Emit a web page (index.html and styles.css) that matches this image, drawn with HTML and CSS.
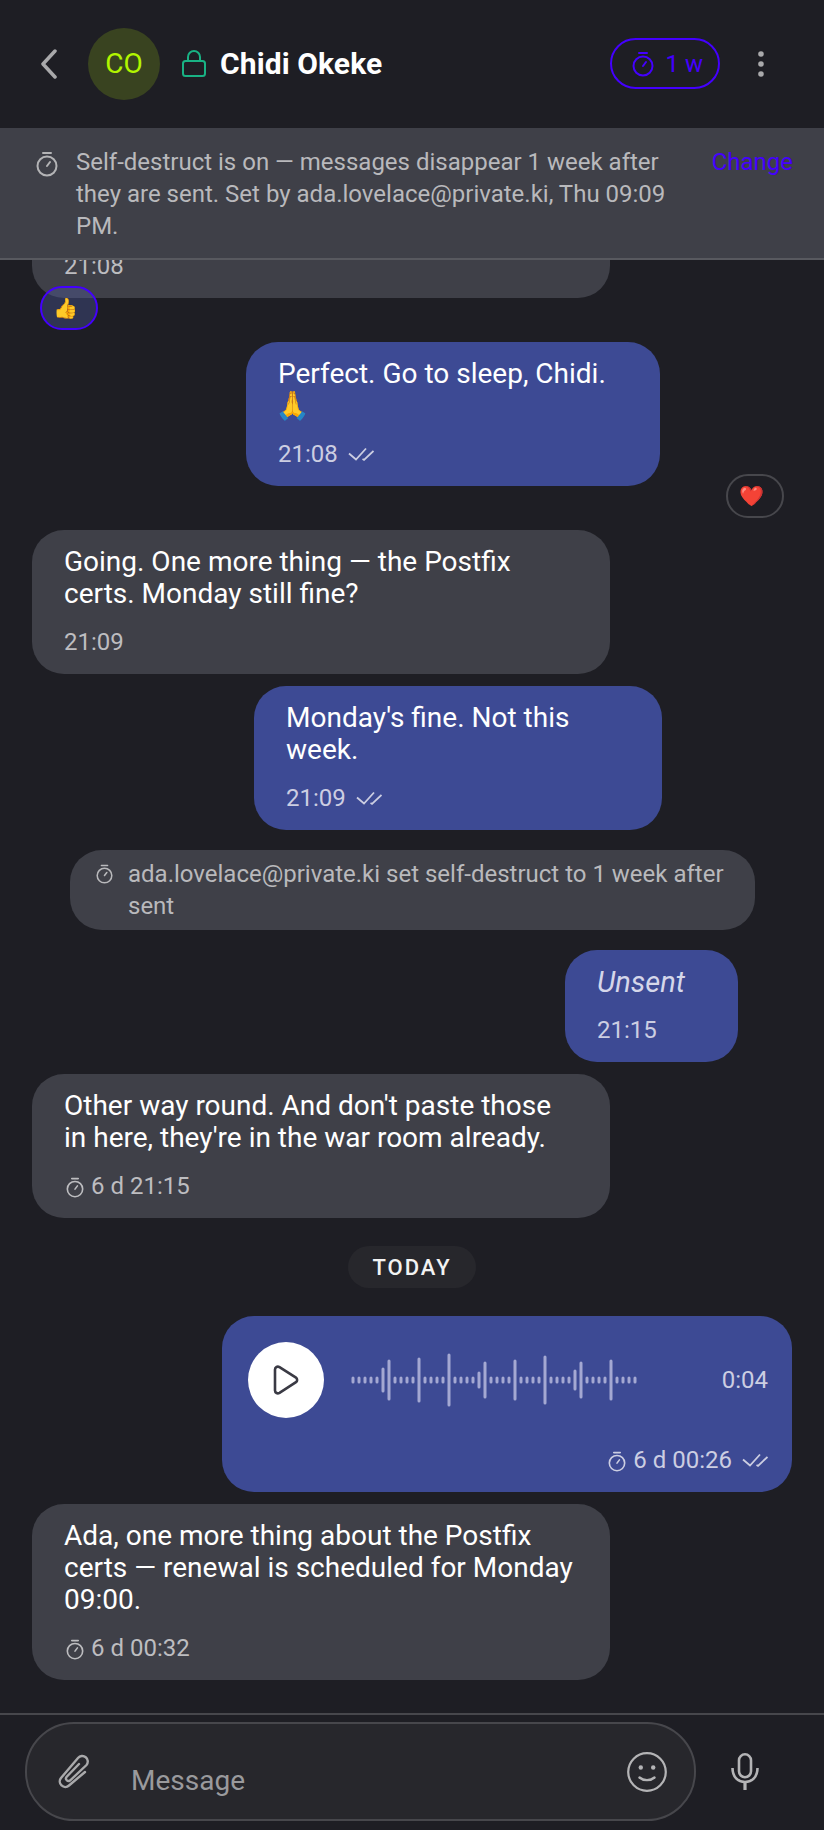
FILE: index.html
```html
<!DOCTYPE html>
<html lang="en">
<head>
    <meta charset="UTF-8">
    <title>Chidi Okeke</title>
    <link rel="stylesheet" href="styles.css">
</head>
<body>

<svg class="defs">
    <symbol id="timer" viewBox="0 0 22 26">
        <path d="M7 2h8M11 15l3-4" fill="none" stroke="currentColor" stroke-width="2" stroke-linecap="round"/>
        <circle cx="11" cy="15" r="9.5" fill="none" stroke="currentColor" stroke-width="2"/>
    </symbol>
    <symbol id="ticks" viewBox="0 0 26 18">
        <path d="M1 8.500l7 6L18 3.500M14.500 14l1.500.8L25.500 6" fill="none" stroke="currentColor" stroke-width="1.800"/>
    </symbol>
</svg>

<!-- header -->
<div class="header">
    <svg class="back" width="18" height="30" viewBox="0 0 18 30"><path d="M15 2L3 15l12 13" fill="none" stroke="currentColor" stroke-width="3.500" stroke-linecap="round" stroke-linejoin="round"/></svg>
    <div class="avatar">CO</div>
    <svg class="lock" width="24" height="27" viewBox="0 0 24 27"><rect x="1" y="11" width="22" height="15" rx="2.500" fill="none" stroke="currentColor" stroke-width="2"/><path d="M6 11V7a6 6 0 0 1 12 0v4" fill="none" stroke="currentColor" stroke-width="2"/></svg>
    <div class="name">Chidi Okeke</div>
    <div class="timer-pill">
        <svg width="22" height="26"><use href="#timer"/></svg>
        <span>1 w</span>
    </div>
    <svg class="kebab" width="6" height="26" viewBox="0 0 6 26"><circle cx="3" cy="3" r="2.800"/><circle cx="3" cy="13" r="2.800"/><circle cx="3" cy="23" r="2.800"/></svg>
</div>

<!-- self-destruct banner -->
<div class="banner">
    <svg class="banner-icon" width="22" height="26"><use href="#timer"/></svg>
    <div class="banner-text">Self-destruct is on — messages disappear 1 week after they are sent. Set by ada.lovelace@private.ki, Thu 09:09 PM.</div>
    <div class="banner-link">Change</div>
</div>

<!-- messages, anchored to the bottom like a scrolled chat -->
<div class="messages">
    <div class="bubble in">
        <div class="meta">21:08</div>
    </div>
    <div class="reaction mine">👍</div>

    <div class="bubble out sent-a">
        <div class="text">Perfect. Go to sleep, Chidi.<br><span class="emoji">🙏</span></div>
        <div class="meta">21:08 <svg class="tick" width="26" height="18"><use href="#ticks"/></svg></div>
    </div>
    <div class="reaction theirs">❤️</div>

    <div class="bubble in">
        <div class="text">Going. One more thing — the Postfix certs. Monday still fine?</div>
        <div class="meta">21:09</div>
    </div>

    <div class="bubble out sent-b">
        <div class="text">Monday's fine. Not this week.</div>
        <div class="meta">21:09 <svg class="tick" width="26" height="18"><use href="#ticks"/></svg></div>
    </div>

    <div class="system">
        <svg class="system-icon" width="17" height="20"><use href="#timer"/></svg>
        <div>ada.lovelace@private.ki set self-destruct to 1 week after sent</div>
    </div>

    <div class="bubble out unsent">
        <div class="text"><em>Unsent</em></div>
        <div class="meta">21:15</div>
    </div>

    <div class="bubble in">
        <div class="text">Other way round. And don't paste those in here, they're in the war room already.</div>
        <div class="meta"><svg class="meta-timer" width="18" height="21"><use href="#timer"/></svg>6 d 21:15</div>
    </div>

    <div class="day">TODAY</div>

    <div class="bubble out voice">
        <div class="player">
            <div class="play">
                <svg width="28" height="32" viewBox="0 0 28 32"><path d="M3 5.500c0-2.500 2.500-3.500 4.500-2.300l16.500 10.500c1.500 1 1.500 3.500 0 4.500L7.500 28.800C5.500 30 3 29 3 26.500z" fill="none" stroke="currentColor" stroke-width="2.600" stroke-linejoin="round"/></svg>
            </div>
            <svg class="wave" width="288" height="54" viewBox="0 0 288 54">
                <path d="M3 25v4M9 25v4M15 25v4M21 25v4M27 25v4M33 16v22M39 8v38M45 25v4M51 25v4M57 25v4M63 25v4M69 6v42M75 25v4M81 25v4M87 25v4M93 25v4M99 2v50M105 25v4M111 25v4M117 25v4M123 25v4M129 20v14M135 10v34M141 25v4M147 25v4M153 25v4M159 25v4M165 8v38M171 25v4M177 25v4M183 25v4M189 25v4M195 4v46M201 25v4M207 25v4M213 25v4M219 25v4M225 18v18M231 10v34M237 25v4M243 25v4M249 25v4M255 25v4M261 8v38M267 25v4M273 25v4M279 25v4M285 25v4"/>
            </svg>
            <div class="duration">0:04</div>
        </div>
        <div class="meta right"><svg class="meta-timer" width="18" height="21"><use href="#timer"/></svg>6 d 00:26 <svg class="tick" width="26" height="18"><use href="#ticks"/></svg></div>
    </div>

    <div class="bubble in">
        <div class="text">Ada, one more thing about the Postfix certs — renewal is scheduled for Monday 09:00.</div>
        <div class="meta"><svg class="meta-timer" width="18" height="21"><use href="#timer"/></svg>6 d 00:32</div>
    </div>
</div>

<!-- composer -->
<div class="composer">
    <div class="input">
        <svg class="clip" width="33" height="36" viewBox="0 0 33 36"><path d="M28 18L12 31.500A5.500 5.500 0 0 1 4 24L21 4A5.500 5.500 0 0 1 29.500 11L13 26.500A2.500 2.500 0 0 1 9.500 23L22 10" fill="none" stroke="currentColor" stroke-width="2.400" stroke-linecap="round"/></svg>
        <div class="placeholder">Message</div>
        <svg class="smile" width="40" height="40" viewBox="0 0 40 40"><circle cx="20" cy="20" r="18.800" fill="none" stroke="currentColor" stroke-width="2.200"/><circle cx="13.800" cy="15.500" r="2.200" fill="currentColor"/><circle cx="26.200" cy="15.500" r="2.200" fill="currentColor"/><path d="M12.500 25.500c4 3.500 11 3.500 15 0" fill="none" stroke="currentColor" stroke-width="2.400" stroke-linecap="round"/></svg>
    </div>
    <svg class="mic" width="28" height="37" viewBox="0 0 28 37"><rect x="8" y="1.300" width="12" height="23" rx="6" fill="none" stroke="currentColor" stroke-width="2.600"/><path d="M1.500 15c0 9 5.500 14 12.500 14s12.500-5 12.500-14" fill="none" stroke="currentColor" stroke-width="2.600"/><path d="M14 29v8" fill="none" stroke="currentColor" stroke-width="3.200"/></svg>
</div>

</body>
</html>
```

FILE: styles.css
```css
html, body {
    height: 100%;
}

body {
    font-family: Roboto, "Noto Sans", sans-serif;
    background-color: #1e1e24;
    color: #ffffff;
    margin: 0;
    display: flex;
    flex-direction: column;
    overflow: hidden;
}

.defs {
    display: none;
}

.header {
    flex: none;
    height: 128px;
    box-sizing: border-box;
    display: flex;
    align-items: center;
    padding: 0 60px 1px 40px;
}

.back {
    color: #a9a9ab;
    flex: none;
}

.avatar {
    width: 72px;
    height: 72px;
    margin-left: 30px;
    border-radius: 50%;
    background-color: #394320;
    color: #b2f500;
    font-size: 28px;
    display: flex;
    align-items: center;
    justify-content: center;
    flex: none;
}

.lock {
    color: #19b284;
    margin-left: 22px;
    flex: none;
}

.name {
    margin-left: 14px;
    font-size: 30px;
    font-weight: 700;
    letter-spacing: 0.1px;
}

.timer-pill {
    margin-left: auto;
    height: 51px;
    box-sizing: border-box;
    padding: 0 15px 0 20px;
    border: 2px solid #4400ff;
    border-radius: 26px;
    color: #4400ff;
    font-size: 24px;
    display: flex;
    align-items: center;
    gap: 12px;
}

.kebab {
    margin-left: 38px;
    fill: #a9a9ab;
    flex: none;
}

.banner {
    flex: none;
    display: flex;
    background-color: #3f4048;
    border-bottom: 2px solid #58595f;
    padding: 18px 31px 16px 36px;
    font-size: 24px;
    line-height: 32px;
}

.banner-icon {
    color: #b4b4b6;
    flex: none;
    margin: 5px 18px 0 0;
}

.banner-text {
    color: #b9b9bc;
    flex: 1;
    max-width: 600px;
}

.banner-link {
    color: #4400ff;
    margin-left: auto;
}

.messages {
    flex: 1;
    min-height: 0;
    overflow: hidden;
    display: flex;
    flex-direction: column;
    justify-content: flex-end;
    padding: 0 32px 33px;
}

.bubble {
    flex: none;
    box-sizing: border-box;
    padding: 16px 32px;
    border-radius: 32px;
    margin-top: 12px;
    font-size: 28px;
    line-height: 32px;
}

.bubble.in {
    width: 578px;
    background-color: #3f4048;
}

.bubble.out {
    background-color: #3d4a94;
    align-self: flex-end;
}

.emoji {
    margin-left: -3px;
}

.sent-a {
    width: 414px;
    margin-right: 132px;
}

.sent-b {
    width: 408px;
    margin-right: 130px;
}

.unsent {
    width: 173px;
    margin-right: 54px;
}

.unsent .text {
    color: #d5d7ea;
    font-size: 29px;
}

.voice {
    width: 570px;
    height: 176px;
    margin-top: 28px;
    padding: 26px 24px 16px 26px;
}

.meta {
    display: flex;
    align-items: center;
    margin-top: 16px;
    height: 32px;
    font-size: 24px;
    color: #bdbdc0;
    white-space: pre-wrap;
}

.out .meta {
    color: #cccee2;
}

.meta-timer {
    margin: 2px 7px 0 2px;
    flex: none;
}

.tick {
    margin-left: 4px;
    flex: none;
}

.meta.right {
    justify-content: flex-end;
    margin-top: 26px;
}

.reaction {
    flex: none;
    width: 58px;
    height: 44px;
    box-sizing: border-box;
    margin-top: -12px;
    padding-right: 7px;
    border-radius: 22px;
    font-size: 20px;
    display: flex;
    align-items: center;
    justify-content: center;
}

.reaction.mine {
    margin-left: 8px;
    border: 2px solid #4400ff;
    background-color: rgba(80, 95, 170, 0.35);
}

.reaction.theirs {
    align-self: flex-end;
    border: 2px solid #47474c;
    margin-right: 8px;
}

.system {
    flex: none;
    display: flex;
    box-sizing: border-box;
    width: 685px;
    margin: 20px 0 8px 38px;
    padding: 8px 28px 8px 26px;
    border-radius: 32px;
    background-color: #3f4048;
    color: #b9b9bc;
    font-size: 24px;
    line-height: 32px;
}

.system-icon {
    flex: none;
    margin: 6px 15px 0 0;
}

.day {
    flex: none;
    align-self: center;
    width: 128px;
    height: 42px;
    margin-top: 28px;
    border-radius: 21px;
    background-color: #27272c;
    color: #f2f2f2;
    font-size: 22px;
    font-weight: 500;
    letter-spacing: 2px;
    display: flex;
    align-items: center;
    justify-content: center;
}

.player {
    display: flex;
    align-items: center;
}

.play {
    width: 76px;
    height: 76px;
    border-radius: 50%;
    background-color: #ffffff;
    color: #3a3a44;
    display: flex;
    align-items: center;
    justify-content: center;
    flex: none;
}

.wave {
    margin-left: 26px;
    flex: none;
    fill: none;
    stroke: #a4a8d2;
    stroke-width: 3;
    stroke-linecap: round;
}

.duration {
    margin-left: auto;
    font-size: 24px;
    color: #cccee2;
}

.composer {
    flex: none;
    display: flex;
    align-items: center;
    height: 117px;
    box-sizing: border-box;
    border-top: 2px solid #47474c;
    padding: 7px 0 9px 25px;
}

.input {
    width: 671px;
    height: 99px;
    box-sizing: border-box;
    border: 2px solid #47474c;
    border-radius: 49px;
    background-color: #27272c;
    display: flex;
    align-items: center;
    padding: 0 27px 0 30px;
}

.clip {
    color: #a9a9ab;
    flex: none;
}

.placeholder {
    margin: 18px 0 0 41px;
    font-size: 28px;
    color: #9a9a9d;
}

.smile {
    margin-left: auto;
    color: #b4b4b6;
    flex: none;
}

.mic {
    margin-left: 35px;
    color: #b4b4b6;
    flex: none;
}
```
